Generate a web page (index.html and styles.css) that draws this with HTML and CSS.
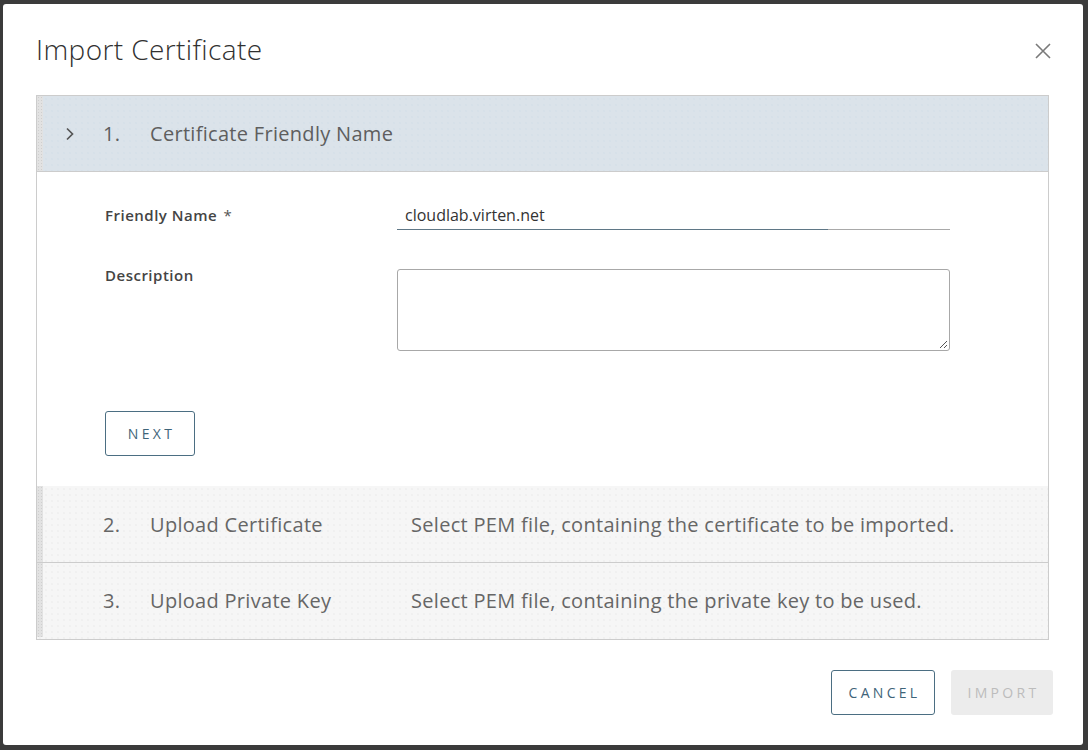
FILE: index.html
```
<!DOCTYPE html>
<html>
<head>
<meta charset="utf-8">
<link rel="stylesheet" href="styles.css">
</head>
<body>
<div class="modal">
  <div class="modal-head">
    <h3 class="modal-title">Import Certificate</h3>
    <button class="close" aria-label="Close">
      <svg width="18" height="18" viewBox="0 0 18 18"><path d="M2 2 L16 16 M16 2 L2 16" stroke="#7a7a7a" stroke-width="1.6" fill="none"/></svg>
    </button>
  </div>
  <div class="stepper">
    <div class="step-head active">
      <span class="strip"></span>
      <span class="chev"><svg width="10" height="14" viewBox="0 0 10 14"><path d="M2 1.5 L7.5 7 L2 12.5" stroke="#555" stroke-width="1.7" fill="none"/></svg></span>
      <span class="num">1.</span>
      <span class="title">Certificate Friendly Name</span>
      <span class="desc"></span>
    </div>
    <div class="step-body">
      <div class="form-row">
        <label class="label">Friendly Name <span class="req">*</span></label>
        <div class="input"><span>cloudlab.virten.net</span></div>
      </div>
      <div class="form-row tall">
        <label class="label">Description</label>
        <div class="textarea">
          <svg class="grip" width="10" height="10" viewBox="0 0 10 10"><path d="M9 2 L2 9 M9 6 L6 9" stroke="#555" stroke-width="1" fill="none"/></svg>
        </div>
      </div>
      <button class="btn btn-outline next">NEXT</button>
    </div>
    <div class="step-head">
      <span class="strip"></span>
      <span class="chev"></span>
      <span class="num">2.</span>
      <span class="title">Upload Certificate</span>
      <span class="desc">Select PEM file, containing the certificate to be imported.</span>
    </div>
    <div class="step-head last">
      <span class="strip"></span>
      <span class="chev"></span>
      <span class="num">3.</span>
      <span class="title">Upload Private Key</span>
      <span class="desc">Select PEM file, containing the private key to be used.</span>
    </div>
  </div>
  <div class="modal-foot">
    <button class="btn btn-outline cancel">CANCEL</button>
    <button class="btn btn-disabled">IMPORT</button>
  </div>
</div>
</body>
</html>
```
FILE: styles.css
```
* { box-sizing: border-box; }
html, body { margin: 0; height: 100%; }
body {
  background: #3b3b3b;
  padding: 4px 0 0 3px;
  font-family: "Open Sans", "Noto Sans", sans-serif;
  color: #333;
}
.modal {
  width: 1080px;
  height: 741px;
  background: #fff;
  border-radius: 3px;
  padding: 29px 35px 0 33px;
  display: flex;
  flex-direction: column;
}
.modal-head {
  display: flex;
  align-items: center;
  justify-content: space-between;
  height: 32px;
}
.modal-title {
  margin: 0;
  font-size: 28px;
  font-weight: 300;
  color: #313131;
  line-height: 32px;
  letter-spacing: 0.4px;
}
.close {
  border: 0;
  background: none;
  padding: 0;
  width: 18px;
  height: 18px;
  margin-right: -4px;
  margin-top: 4px;
}
.stepper {
  margin-top: 30px;
  border: 1px solid #ccc;
  width: 1013px;
}
.step-head {
  display: grid;
  grid-template-columns: 6px 60px 47px 261px 1fr;
  align-items: center;
  height: 76px;
  background-color: #f6f6f6;
  background-image: radial-gradient(circle, #e9e9e9 0.6px, transparent 0.8px);
  background-size: 6px 6px;
  border-top: 1px solid #ccc;
  font-size: 20px;
  letter-spacing: 0.3px;
  color: #666;
}
.step-head.active {
  border-top: 0;
  height: 76px;
  border-bottom: 1px solid #ccc;
  background-color: #dbe3ea;
  background-image: radial-gradient(circle, #d0dde6 0.6px, transparent 0.8px);
  color: #5e5e5e;
}
.strip {
  align-self: stretch;
  background-color: #e2e2e2;
  background-image: radial-gradient(circle, #cfcfcf 0.6px, transparent 0.8px);
  background-size: 3px 3px;
}
.chev {
  display: flex;
  align-items: center;
  padding-left: 22px;
  padding-top: 1px;
}
.desc { white-space: nowrap; }
.step-body {
  padding: 33px 0 30px 68px;
  border-bottom: 1px solid #ccc;
  margin-bottom: -1px;
}
.step-body + .step-head { border-top: 0; }
.last { height: 77px; padding-bottom: 2px; }
.form-row {
  display: flex;
  align-items: flex-start;
}
.label {
  width: 292px;
  font-size: 15px;
  font-weight: 600;
  letter-spacing: 0.5px;
  color: #444;
  line-height: 20px;
}
.req { font-weight: 400; color: #555; margin-left: 2px; }
.input {
  position: relative;
  width: 553px;
  height: 25px;
  border-bottom: 1px solid #a9a9a9;
  padding: 0 8px;
  font-size: 16px;
  color: #333;
  line-height: 20px;
}
.input::after {
  content: "";
  position: absolute;
  left: 0;
  bottom: -1px;
  width: 431px;
  height: 1px;
  background: #5f7786;
}
.form-row.tall { margin-top: 39px; }
.form-row.tall .label { margin-top: -4px; }
.textarea {
  position: relative;
  width: 553px;
  height: 82px;
  border: 1px solid #a8a8a8;
  border-radius: 3px;
}
.grip { position: absolute; right: 1px; bottom: 1px; }
.btn {
  font-family: inherit;
  height: 45px;
  border-radius: 3px;
  font-size: 14px;
  letter-spacing: 3.3px;
  font-weight: 500;
  padding: 0 0 0 3px;
}
.btn-outline {
  background: #fff;
  border: 1px solid #4b6e82;
  color: #3f6479;
}
.next { width: 90px; margin-top: 60px; display: block; }
.modal-foot {
  display: flex;
  justify-content: flex-end;
  gap: 16px;
  margin-top: 30px;
  margin-right: -5px;
}
.cancel { width: 104px; }
.btn-disabled {
  width: 102px;
  border: 0;
  background: #ececec;
  color: #bcbcbc;
}
```
